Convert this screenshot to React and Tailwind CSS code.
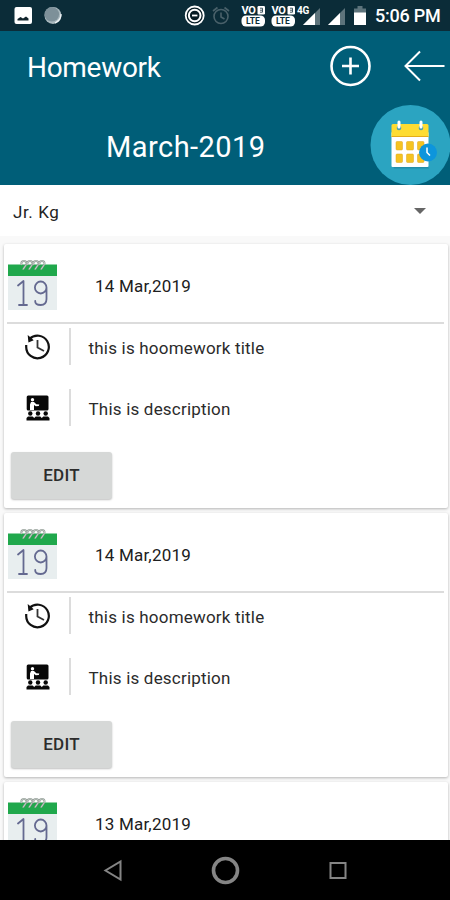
import React from 'react';

const homework = [
  { id: 1, date: '14 Mar,2019', title: 'this is hoomework title', description: 'This is description' },
  { id: 2, date: '14 Mar,2019', title: 'this is hoomework title', description: 'This is description' },
  { id: 3, date: '13 Mar,2019' },
];

const VolteIcon = () => (
  <svg width="25" height="22" viewBox="0 0 25 22" className="shrink-0">
    <text x="0.500" y="9.200" fill="#fff" fontFamily="Roboto" fontSize="11" fontWeight="700" letterSpacing="-0.300">VO</text>
    <rect x="16.500" y="1" width="7.500" height="8.500" rx="1.200" fill="#fff" />
    <path d="M19 3.200h2.500v4H19M19 5.200h2.500" stroke="#3d555f" strokeWidth="1" fill="none" />
    <rect x="0.500" y="10.500" width="23.500" height="11" rx="4.500" fill="#fff" />
    <text x="5" y="19" fill="#0b2c38" fontFamily="Roboto" fontSize="8.500" fontWeight="700">LTE</text>
  </svg>
);

const SignalIcon = () => (
  <svg width="17" height="17" viewBox="0 0 17 17" className="shrink-0">
    <path d="M17 0v17H0z" fill="#5d737b" />
    <path d="M12 5v12H0z" fill="#fff" />
  </svg>
);

const StatusBar = () => (
  <div className="relative h-[31px] shrink-0 bg-[#0b2c38]">
    <svg width="50" height="20" viewBox="0 0 50 20" className="absolute left-[14px] top-[6px]">
      <rect x="0.5" y="1" width="17.5" height="17" rx="2" fill="#fff" />
      <path d="M3.500 14.500v-1.500l3-2 2.500 1.500 3-2 2.500 2v2z" fill="#10242c" />
      <circle cx="39" cy="9.500" r="8.500" fill="#a9b8be" />
      <circle cx="37.800" cy="8.300" r="7.300" fill="#7d9099" />
      <path d="M41 17q6-3 6-9" stroke="#eef3f5" strokeWidth="1.300" fill="none" />
    </svg>
    <svg width="48" height="22" viewBox="0 0 48 22" className="absolute left-[184px] top-[5px]">
      <circle cx="10.700" cy="10.500" r="9" fill="#071c24" stroke="#fff" strokeWidth="1.800" />
      <circle cx="10.700" cy="10.500" r="5.800" fill="none" stroke="#fff" strokeWidth="2" />
      <path d="M8 10.500h5.400" stroke="#fff" strokeWidth="1.800" />
      <g stroke="#4a616a" fill="none" strokeWidth="1.600">
        <circle cx="37" cy="11.500" r="7" />
        <path d="M37 7.500v4.500l3.500 2M29 6l4.500-3.500M45 6l-4.500-3.500" />
      </g>
    </svg>
    <div className="absolute left-[241px] top-[5px] flex gap-[5px]">
      <VolteIcon />
      <VolteIcon />
    </div>
    <div className="absolute left-[303px] top-[8px] flex gap-2">
      <SignalIcon />
      <SignalIcon />
    </div>
    <span className="absolute left-[297px] top-[5px] text-[10px] leading-[11px] font-bold tracking-tight text-white">4G</span>
    <svg width="12" height="20" viewBox="0 0 12 20" className="absolute left-[354px] top-[6px]">
      <path d="M3.500 0h5v2.500H12V8H0V2.500h3.500z" fill="#5d737b" />
      <path d="M0 6.500h12V19H0z" fill="#fff" />
    </svg>
    <span className="absolute left-[375px] top-[5px] text-[18px] leading-[22px] font-medium tracking-[-0.250px] whitespace-nowrap text-white">5:06 PM</span>
  </div>
);

const Header = () => (
  <header className="h-[154px] shrink-0 bg-[#005e78] text-white">
    <div className="flex h-[73px] items-center pl-[27px]">
      <h1 className="flex-1 text-[28px] leading-8 tracking-[-0.3px]">Homework</h1>
      <svg width="42" height="42" viewBox="0 0 42 42" fill="none" stroke="#fff" className="mt-[-4px] mr-[31px]">
        <circle cx="20.500" cy="21" r="19" strokeWidth="2.600" />
        <path d="M20.500 12.500v17M12 21h17" strokeWidth="2.600" />
      </svg>
      <svg width="42" height="32" viewBox="0 0 42 32" fill="none" stroke="#fff" strokeWidth="2" className="mt-[-4px] mr-[5px]">
        <path d="M41.500 16H2.500M17 1.500L2.500 16 17 30.500" />
      </svg>
    </div>
    <div className="flex h-[81px] items-center pl-[106px]">
      <h2 className="flex-1 pt-[4px] text-[29px] leading-9 tracking-[0.450px]">March-2019</h2>
      <CalendarButton />
    </div>
  </header>
);

const CalendarButton = () => (
  <svg width="80" height="81" viewBox="0 0 80 81" className="shrink-0">
    <circle cx="40.500" cy="41" r="40" fill="#2ba4c1" />
    <path d="M23 61h34l2 3.500H24z" fill="#238da9" />
    <rect x="21.500" y="28" width="37" height="35" rx="1" fill="#fff" />
    <path d="M21.500 21.500q0-1.500 1.500-1.500h34q1.500 0 1.500 1.500v11.500h-37z" fill="#fedc31" />
    <path d="M21.500 32.500h37" stroke="#e5ad18" strokeWidth="1" />
    <circle cx="29" cy="24" r="2.300" fill="#4b9eae" />
    <circle cx="51" cy="24" r="2.300" fill="#4b9eae" />
    <path d="M29 18v5M51 18v5" stroke="#fff" strokeWidth="3" strokeLinecap="round" />
    <g fill="#f5c321" stroke="#dfa419" strokeWidth="0.500">
      <rect x="26" y="37.500" width="6.500" height="8.500" rx="1" />
      <rect x="36.500" y="37.500" width="7" height="8.500" rx="1" />
      <rect x="47.500" y="37.500" width="6.500" height="8.500" rx="1" />
      <rect x="26" y="50" width="6.500" height="8.500" rx="1" />
      <rect x="36.500" y="50" width="7" height="8.500" rx="1" />
      <rect x="47.500" y="50" width="6.500" height="8.500" rx="1" />
    </g>
    <circle cx="58" cy="48.500" r="9" fill="#0d95dc" />
    <path d="M57 43.500v5l3 3" stroke="#fff" strokeWidth="1.500" fill="none" />
  </svg>
);

const rings = [12.5, 18.5, 24.5, 30.5];

const DateIcon = () => (
  <svg width="49" height="51" viewBox="0 0 49 51" fill="none" className="shrink-0">
    <path d="M0 15h49v35H0z" fill="#e8eeef" />
    <path d="M0 4.500h49V16H0z" fill="#20a84c" />
    {rings.map((x) => (
      <g key={x} transform={`translate(${x} 0)`}>
        <path d="M1.500 5C0 3 1 1 3.500 1s3.300 2 1.800 4.300L2.500 9.500" stroke="#87918a" strokeWidth="1.900" />
        <path d="M1.500 5C0 3 1 1 3.500 1s3.300 2 1.800 4.300L2.500 9.500" stroke="#dce3df" strokeWidth="0.800" />
      </g>
    ))}
    <g stroke="#646990" strokeWidth="1.800" strokeLinecap="round" strokeLinejoin="round">
      <path d="M10 25.500l5.500-4.500v24M11 45h8" />
      <path d="M38.500 27.500a5.800 6 0 1 0-11.600 0a5.800 6 0 1 0 11.600 0V39q0 6-5.800 6t-5.500-4" />
    </g>
  </svg>
);

const HistoryIcon = () => (
  <svg width="27" height="26" viewBox="0 0 27 26" fill="none" stroke="#111" className="ml-[2px]">
    <path d="M5.500 5A11.300 11.300 0 1 1 2.200 13v-2" strokeWidth="2.200" />
    <path d="M4.500 2.500l4 3.500-3.500 1.500z" fill="#111" strokeWidth="1.300" />
    <path d="M13.500 6v7.500l6.500 3.500" strokeWidth="1.800" stroke="#333" />
  </svg>
);

const ClassIcon = () => (
  <svg width="24" height="26" viewBox="0 0 24 26" fill="#080808" className="ml-[3px]">
    <rect x="0.700" y="0.500" width="21.800" height="15" rx="1.500" />
    <circle cx="6.500" cy="4.800" r="1.700" fill="#fff" />
    <path d="M5 7h3l2.300 2.300 3 .2-.5 1.500-3 .2-1.800-1.200v5H4V9.500z" fill="#fff" />
    <circle cx="4.300" cy="18.500" r="2.200" />
    <circle cx="12" cy="18.500" r="2.200" />
    <circle cx="19.700" cy="18.500" r="2.200" />
    <path d="M0.500 25.500V23l1.500-1.500h4.600L8.200 23l1.500-1.500h4.600l1.500 1.500 1.500-1.500h4.700l1.500 1.500v2.500z" />
  </svg>
);

const DetailRow = ({ icon, children }) => (
  <div className="flex h-[37px] items-center">
    <div className="flex w-[65px] justify-center">{icon}</div>
    <div className="h-full w-[1.500px] bg-[#dcdcdc]"></div>
    <p className="pt-[2px] pl-[18px] text-[17px] leading-6 tracking-[0.2px] whitespace-nowrap text-[#2b2b2b]">{children}</p>
  </div>
);

const HomeworkCard = ({ item }) => (
  <article className="h-[264px] shrink-0 rounded-[2px] bg-white shadow-[0_1px_3px_rgba(0,0,0,0.28)]">
    <div className="flex h-[78px] pt-[16px] pl-[4px]">
      <DateIcon />
      <p className="pt-[14px] pl-[38px] text-[17px] leading-6 tracking-[0.2px] text-[#202020]">{item.date}</p>
    </div>
    <hr className="mr-[4px] ml-[3px] h-[2px] border-0 bg-[#dcdcdc]" />
    {item.title && (
      <>
        <div className="flex flex-col gap-6 pt-[4px]">
          <DetailRow icon={<HistoryIcon />}>{item.title}</DetailRow>
          <DetailRow icon={<ClassIcon />}>{item.description}</DetailRow>
        </div>
        <button className="mt-[26px] ml-[7px] h-[47px] w-[101px] rounded-[3px] bg-[#d6d8d7] text-[17px] font-medium tracking-[0.2px] text-[#2c2c2c] shadow-[0_1px_2px_rgba(0,0,0,0.250)]">
          EDIT
        </button>
      </>
    )}
  </article>
);

const NavBar = () => (
  <nav className="h-[60px] shrink-0 bg-black">
    <svg width="450" height="60" viewBox="0 0 450 60" fill="none" stroke="#858585" strokeWidth="2">
      <path d="M120.500 21.500v18L105.500 30.500z" />
      <circle cx="225.500" cy="30.500" r="12" strokeWidth="3.600" />
      <rect x="330.500" y="23" width="15" height="15" />
    </svg>
  </nav>
);

const App = () => {
  return (
    <div className="flex h-[900px] w-[450px] flex-col overflow-hidden bg-[#f9f9f9] font-['Roboto',sans-serif]">
      <StatusBar />
      <Header />
      <div className="flex h-[51px] shrink-0 items-center justify-between bg-white pr-[24px] pl-[13px]">
        <span className="pt-[2px] text-[17px] leading-6 tracking-[0.6px] text-[#222]">Jr. Kg</span>
        <svg width="12" height="6" viewBox="0 0 12 6">
          <path d="M0 0h12L6 6z" fill="#666" />
        </svg>
      </div>
      <main className="flex min-h-0 flex-1 flex-col gap-[5px] overflow-hidden pt-[8px] pr-[2px] pl-[4px]">
        {homework.map((item) => (
          <HomeworkCard key={item.id} item={item} />
        ))}
      </main>
      <NavBar />
    </div>
  );
};

export default App;
